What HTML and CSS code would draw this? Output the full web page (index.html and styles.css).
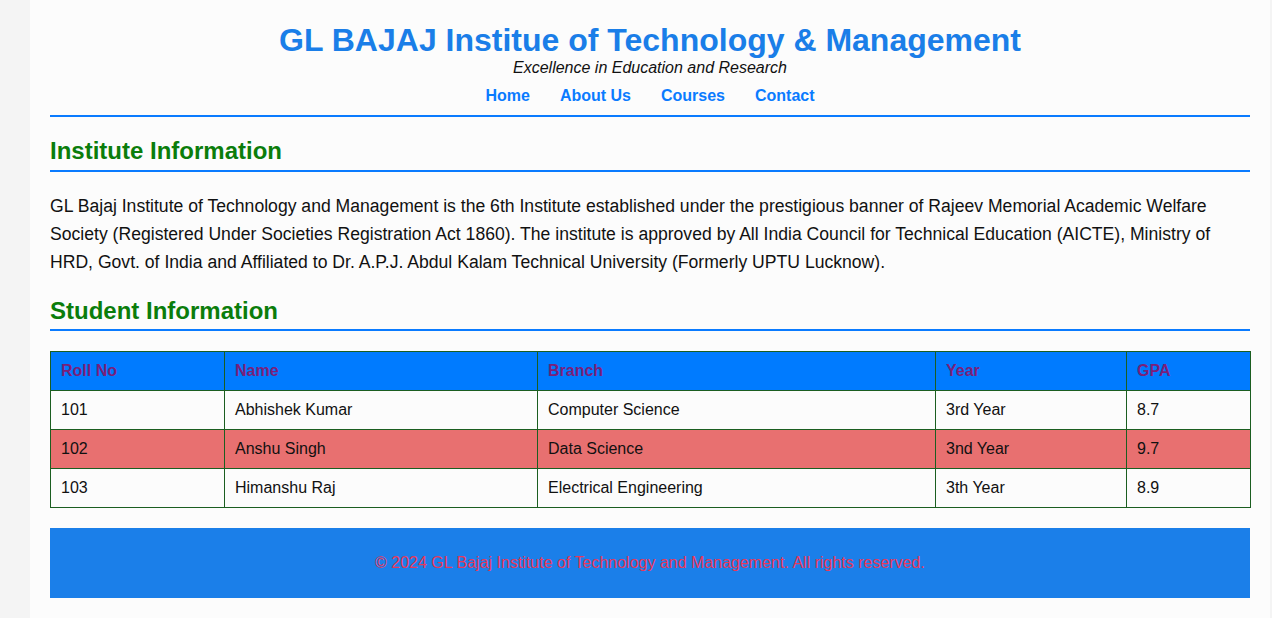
FILE: index.html
```html
<!DOCTYPE html>
<html lang="en">
<head>
<meta charset="utf-8">
<title>GL BAJAJ Institue of Technology &amp; Management</title>
<link rel="stylesheet" href="styles.css">
</head>
<body>
<div class="container">
  <header class="site-header">
    <h1 class="title">GL BAJAJ Institue of Technology &amp; Management</h1>
    <p class="tagline">Excellence in Education and Research</p>
    <nav class="nav">
      <a href="#">Home</a>
      <a href="#">About Us</a>
      <a href="#">Courses</a>
      <a href="#">Contact</a>
    </nav>
  </header>

  <section class="section">
    <h2 class="section-title">Institute Information</h2>
    <p class="info">GL Bajaj Institute of Technology and Management is the 6th Institute established under the prestigious banner of Rajeev Memorial Academic Welfare Society (Registered Under Societies Registration Act 1860). The institute is approved by All India Council for Technical Education (AICTE), Ministry of HRD, Govt. of India and Affiliated to Dr. A.P.J. Abdul Kalam Technical University (Formerly UPTU Lucknow).</p>
  </section>

  <section class="section section-students">
    <h2 class="section-title">Student Information</h2>
    <table class="students">
      <colgroup>
        <col class="c1"><col class="c2"><col class="c3"><col class="c4"><col class="c5">
      </colgroup>
      <thead>
        <tr><th>Roll No</th><th>Name</th><th>Branch</th><th>Year</th><th>GPA</th></tr>
      </thead>
      <tbody>
        <tr><td>101</td><td>Abhishek Kumar</td><td>Computer Science</td><td>3rd Year</td><td>8.7</td></tr>
        <tr class="highlight"><td>102</td><td>Anshu Singh</td><td>Data Science</td><td>3nd Year</td><td>9.7</td></tr>
        <tr><td>103</td><td>Himanshu Raj</td><td>Electrical Engineering</td><td>3th Year</td><td>8.9</td></tr>
      </tbody>
    </table>
  </section>

  <footer class="site-footer">
    <p>&copy; 2024 GL Bajaj Institute of Technology and Management. All rights reserved.</p>
  </footer>
</div>
</body>
</html>
```

FILE: styles.css
```css
html, body {
  margin: 0;
}
body {
  background: #f4f4f4;
  font-family: "Liberation Sans", Arial, sans-serif;
  color: #111;
  padding: 0 2px 0 30px;
}
.container {
  background: #fcfcfc;
  padding: 20px 20px 24px;
}
.site-header {
  text-align: center;
  border-bottom: 2px solid #0a7bff;
  padding-bottom: 9px;
}
.title {
  margin: 0;
  font-size: 32px;
  line-height: 40px;
  color: #1a7ee8;
}
.tagline {
  margin: 0;
  font-style: italic;
  font-size: 16px;
  line-height: 16px;
}
.nav {
  margin-top: 10px;
  display: flex;
  justify-content: center;
  gap: 30px;
}
.nav a {
  font-weight: bold;
  font-size: 16px;
  line-height: 20px;
  color: #0a7bff;
  text-decoration: none;
}
.section-title {
  margin: 18px 0 0;
  font-size: 24px;
  line-height: 32px;
  color: #0b7d0b;
  border-bottom: 2px solid #0a7bff;
  padding-bottom: 3px;
}
.section-students .section-title {
  margin-top: 19px;
  padding-bottom: 2px;
}
.info {
  margin: 20px 0 0;
  font-size: 17.6px;
  line-height: 28px;
}
.students {
  margin-top: 20px;
  width: 100%;
  border-collapse: collapse;
  table-layout: fixed;
}
.c1 { width: 174px; }
.c2 { width: 313px; }
.c3 { width: 398px; }
.c4 { width: 191px; }
.c5 { width: 124px; }
.students th, .students td {
  border: 1px solid #1b5e20;
  padding: 10px;
  text-align: left;
  font-size: 16px;
  line-height: 18px;
}
.students th {
  background: #007bff;
  color: #7a1f7a;
}
.highlight td {
  background: #e87070;
}
.site-footer {
  margin-top: 20px;
  background: #1b7fe9;
  text-align: center;
  padding: 25px 0 26px;
}
.site-footer p {
  margin: 0;
  color: #e8385a;
  font-size: 16px;
  line-height: 19px;
}
```
